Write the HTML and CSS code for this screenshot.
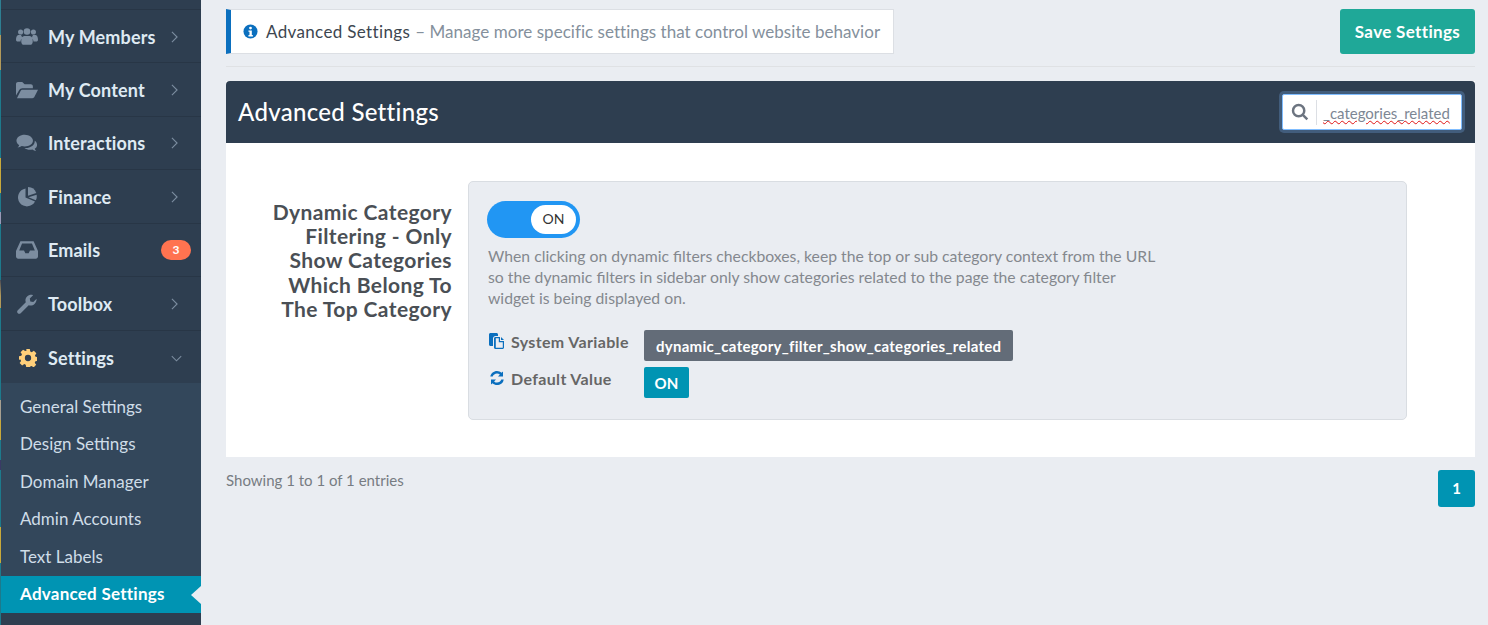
FILE: index.html
```html
<!DOCTYPE html>
<html lang="en">
<head>
    <meta charset="UTF-8">
    <title>Advanced Settings</title>
    <link rel="stylesheet" href="styles.css">
</head>
<body>

    <div class="page-edge"></div>

    <!-- Sidebar -->
    <nav class="sidebar">
        <a class="nav-item first">
            <svg class="nav-icon" viewBox="0 0 24 20"><circle cx="5" cy="4.5" r="2.8"/><circle cx="19" cy="4.5" r="2.8"/><circle cx="12" cy="4" r="3.6"/><path d="M0 13c0-3 1-5 2.500-5.300h3c.3 1.200 1 2.200 1.800 2.900-1.500 1-2.300 2.500-2.300 4.400H2c-1.300 0-2-.8-2-2zM24 13c0-3-1-5-2.500-5.300h-3c-.3 1.200-1 2.200-1.800 2.900 1.500 1 2.300 2.500 2.300 4.400H22c1.300 0 2-.8 2-2zM9 9h6c2.200 0 3.300 2.300 3.300 5.500 0 2.500-1.200 4-3 4H8.700c-1.800 0-3-1.500-3-4C5.700 11.300 6.800 9 9 9z"/></svg>
            <span class="nav-label">My Members</span>
            <svg class="chevron" viewBox="0 0 8 14"><path d="M1 1l6 6-6 6"/></svg>
        </a>
        <a class="nav-item">
            <svg class="nav-icon" viewBox="0 0 24 18"><path d="M0 15V2.500C0 1.200 1 .2 2.200 .2h4.600l2.600 2.500h6.800c1.200 0 2.200 1 2.200 2.200V7H7c-1.600 0-2.900.8-3.600 2.200z"/><path d="M1 18l4-8c.4-.8 1.200-1.300 2.100-1.300H24l-4 8c-.4.8-1.200 1.300-2.100 1.300z"/></svg>
            <span class="nav-label">My Content</span>
            <svg class="chevron" viewBox="0 0 8 14"><path d="M1 1l6 6-6 6"/></svg>
        </a>
        <a class="nav-item">
            <svg class="nav-icon" viewBox="0 0 24 18"><path d="M9.500 0C4.500 0 .5 2.900.5 6.500c0 2 1.200 3.700 3 4.900-.3 1-1 1.900-1.800 2.600 1.600-.2 3.300-.8 4.600-1.700 1 .3 2.100.4 3.200.4 5 0 9-2.900 9-6.200S14.500 0 9.500 0z"/><path d="M20.500 6.500c.2 4.500-4.500 8-10 8l-1.300-.1c1.500 1.300 3.700 2 6 2 .9 0 1.800-.1 2.600-.3 1.100.8 2.600 1.400 4.200 1.600-.7-.6-1.300-1.500-1.600-2.400 1.600-1 2.600-2.600 2.600-4.200 0-2-1-3.500-2.500-4.600z"/></svg>
            <span class="nav-label">Interactions</span>
            <svg class="chevron" viewBox="0 0 8 14"><path d="M1 1l6 6-6 6"/></svg>
        </a>
        <a class="nav-item">
            <svg class="nav-icon" viewBox="0 0 20 20"><path d="M8.500 1.500a9 9 0 1 0 9.500 13L8.500 10.500z"/><path d="M11 0v8.700l8.300-2.600A9 9 0 0 0 11 0z"/><path d="M11.500 10.200l8.100-2.500c.4 2 .1 3.900-.8 5.600z"/></svg>
            <span class="nav-label">Finance</span>
            <svg class="chevron" viewBox="0 0 8 14"><path d="M1 1l6 6-6 6"/></svg>
        </a>
        <a class="nav-item">
            <svg class="nav-icon" viewBox="0 0 20 16"><path fill-rule="evenodd" d="M4 0h12l4 9v5c0 1.100-.9 2-2 2H2c-1.100 0-2-.9-2-2V9zm1.500 2.200L2.900 8.500h4.400l1.200 2.500h3l1.200-2.500h4.400l-2.600-6.300z"/></svg>
            <span class="nav-label">Emails</span>
            <span class="count-badge">3</span>
        </a>
        <a class="nav-item">
            <svg class="nav-icon" viewBox="0 0 20 20"><path d="M19.600 4.700l-3.300 3.300-3-.5-.5-3 3.300-3.300c-2-.7-4.400-.3-6 1.300-1.700 1.700-2 4-1.300 5.800L.8 16.300c-.9.900-.9 2.100 0 2.900.8.800 2 .8 2.900 0l8-8c1.900.8 4.200.4 5.800-1.300 1.600-1.600 2.100-3.200 2.100-5.200z"/></svg>
            <span class="nav-label">Toolbox</span>
            <svg class="chevron" viewBox="0 0 8 14"><path d="M1 1l6 6-6 6"/></svg>
        </a>
        <a class="nav-item open">
            <svg class="nav-icon gear" viewBox="0 0 20 20"><path fill-rule="evenodd" d="M8 0h4l.5 2.800 1.600.7 2.400-1.600 2.800 2.800-1.600 2.400.7 1.600 2.600.4v4l-2.800.5-.7 1.600 1.600 2.400-2.800 2.800-2.400-1.600-1.400.7L12 20H8l-.5-2.500-1.600-.7-2.400 1.600-2.800-2.800 1.600-2.400-.7-1.600L0 12V8l2.600-.5.7-1.600-1.600-2.400 2.800-2.800 2.400 1.600 1.600-.7zM10 6.500a3.500 3.500 0 1 0 0 7 3.500 3.500 0 0 0 0-7z"/></svg>
            <span class="nav-label">Settings</span>
            <svg class="chevron down" viewBox="0 0 14 8"><path d="M1 1l6 6 6-6"/></svg>
        </a>
        <div class="subnav">
            <a class="sub-item">General Settings</a>
            <a class="sub-item">Design Settings</a>
            <a class="sub-item">Domain Manager</a>
            <a class="sub-item">Admin Accounts</a>
            <a class="sub-item">Text Labels</a>
            <a class="sub-item active">Advanced Settings</a>
        </div>
    </nav>

    <!-- Main Content -->
    <main class="main">
        <div class="top-bar">
            <div class="notice">
                <svg class="notice-icon" viewBox="0 0 16 16"><circle cx="8" cy="8" r="7.500"/><circle cx="8" cy="4.300" r="1.500" fill="#fff"/><path d="M5.800 6.800h3.600v5h1.100v1.500H5.800v-1.500h1.100V8.300H5.800z" fill="#fff"/></svg>
                <span class="notice-title">Advanced Settings</span>
                <span class="notice-text">&ndash; Manage more specific settings that control website behavior</span>
            </div>
            <button class="save-button">Save Settings</button>
        </div>

        <section class="panel">
            <header class="panel-head">
                <h1>Advanced Settings</h1>
                <div class="search-box">
                    <svg class="search-icon" viewBox="0 0 16 16"><circle cx="6.800" cy="6.800" r="5"/><path d="M10.500 10.500l4 4"/></svg>
                    <span class="search-divider"></span>
                    <span class="search-value">_categories_related</span>
                </div>
            </header>
            <div class="panel-body">
                <div class="setting-name">Dynamic Category Filtering - Only Show Categories Which Belong To The Top Category</div>
                <div class="setting-box">
                    <div class="toggle"><span class="toggle-knob">ON</span></div>
                    <p class="setting-help">When clicking on dynamic filters checkboxes, keep the top or sub category context from the URL so the dynamic filters in sidebar only show categories related to the page the category filter widget is being displayed on.</p>
                    <div class="meta-grid">
                        <div class="meta-label">
                            <svg class="meta-icon" viewBox="0 0 16 16"><path d="M0 1.500C0 .7.700 0 1.500 0h6C8.300 0 9 .7 9 1.500V3H6.500C5.100 3 4 4.100 4 5.500V13H1.500C.7 13 0 12.300 0 11.500z"/><path fill-rule="evenodd" d="M6.500 4H11v4h4v6.500c0 .8-.7 1.500-1.500 1.500h-7C5.700 16 5 15.300 5 14.500v-9C5 4.700 5.700 4 6.500 4zm.3 1.200v9.600h7V9.200H9.800V5.200z"/><path d="M12 4l3 3h-3z"/></svg>
                            System Variable
                        </div>
                        <span class="tag tag-gray">dynamic_category_filter_show_categories_related</span>
                        <div class="meta-label">
                            <svg class="meta-icon" viewBox="0 0 16 16"><path d="M14 1.500v5h-5l1.900-1.900C10 3.800 9 3.400 8 3.400c-2 0-3.700 1.300-4.300 3.100H1.300C2 3.300 4.700 1 8 1c1.700 0 3.300.7 4.500 1.800zM2 14.500v-5h5l-1.900 1.900c.9.800 1.900 1.200 2.900 1.200 2 0 3.700-1.300 4.300-3.100h2.400C14 13.700 11.300 15 8 15c-1.700 0-3.300-.7-4.500-1.800z"/></svg>
                            Default Value
                        </div>
                        <span class="tag tag-teal">ON</span>
                    </div>
                </div>
            </div>
        </section>

        <div class="table-foot">
            <span class="entries">Showing 1 to 1 of 1 entries</span>
            <span class="page-button">1</span>
        </div>
    </main>

</body>
</html>
```

FILE: styles.css
```css
body, html {
    margin: 0;
    padding: 0;
    height: 100%;
    overflow: hidden;
    background: #eaedf2;
    font-family: 'Lato', 'Noto Sans', sans-serif;
}

body {
    display: flex;
}

/* Sliver of the page behind the sidebar */
.page-edge {
    width: 1px;
    flex: none;
    background: linear-gradient(to bottom,
        #2e7f92 0, #2e7f92 35px,
        #b39a5a 35px, #b39a5a 70px,
        #1d7a8c 70px, #1d7a8c 158px,
        #c9a93a 158px, #c9a93a 193px,
        #1d7a8c 193px, #1d7a8c 212px,
        #9a9ab8 212px, #9a9ab8 224px,
        #1d7a8c 224px, #1d7a8c 280px,
        #4a4a55 280px, #b39a5a 296px, #b39a5a 308px,
        #1d7a8c 308px, #1d7a8c 400px,
        #a8a090 400px, #a8a090 420px,
        #c9a93a 420px, #c9a93a 440px,
        #1d7a8c 440px, #1d7a8c 460px,
        #3a3a66 460px, #3a3a66 470px,
        #1d7a8c 470px, #1d7a8c 527px,
        #c9a93a 527px, #c9a93a 563px,
        #1d7a8c 563px, #1d7a8c 100%);
}

/* Sidebar */
.sidebar {
    width: 200px;
    flex: none;
    height: 625px;
    background: #2e3e50;
    color: #dfeaf3;
    overflow: hidden;
}

.nav-item {
    display: flex;
    align-items: center;
    box-sizing: border-box;
    height: 53.5px;
    padding: 1px 23px 0 15px;
    border-bottom: 1px solid #283646;
    font-size: 18px;
    font-weight: 700;
    letter-spacing: 0.15px;
}

.nav-item.first {
    height: 54px;
    margin-top: 9px;
    border-top: 1px solid #283646;
}

.nav-icon {
    width: 22px;
    height: 20px;
    margin-right: 10px;
    fill: #7c8da0;
    flex: none;
}

.nav-icon.gear {
    fill: #ffcf7a;
    width: 18px;
    height: 18px;
    margin: 0 11px 0 3px;
}

.nav-label {
    flex: 1;
}

.chevron {
    width: 7px;
    height: 12px;
    fill: none;
    stroke: #7c8da0;
    stroke-width: 1.300;
}

.chevron.down {
    width: 11px;
    height: 7px;
    margin-right: -4px;
}

.count-badge {
    width: 30px;
    height: 20px;
    margin-right: -13px;
    border-radius: 10px;
    background: #ff7350;
    color: #fff;
    font-size: 12px;
    text-align: center;
    line-height: 20px;
}

.nav-item.open {
    height: 52.5px;
    padding-top: 3px;
    border-bottom: 0;
    background: #2e3e50;
}

.subnav {
    box-sizing: border-box;
    background: #33475b;
    height: 230px;
    padding-top: 5.5px;
}

.sub-item {
    display: block;
    height: 37.5px;
    line-height: 35.5px;
    padding-left: 19px;
    font-size: 17px;
    color: #cfdde8;
    position: relative;
}

.sub-item.active {
    height: 37px;
    background: #0094b3;
    color: #fff;
    font-weight: 700;
    letter-spacing: 0.25px;
}

.sub-item.active::after {
    content: '';
    position: absolute;
    right: 0;
    top: 10px;
    border: 9px solid transparent;
    border-left: 0;
    border-right: 10px solid #eaedf2;
}

/* Main Content */
.main {
    flex: 1;
    padding: 9px 13px 0 25px;
    min-width: 0;
}

.top-bar {
    display: flex;
    justify-content: space-between;
    align-items: flex-start;
    padding-bottom: 12px;
    border-bottom: 1px solid #dfe1e4;
    margin-bottom: 14px;
}

.notice {
    display: flex;
    align-items: center;
    height: 45px;
    box-sizing: border-box;
    padding-left: 12px;
    padding-right: 13px;
    background: #fff;
    border: 1px solid #dcdfe4;
    border-left: 5px solid #0b6fbe;
    font-size: 17px;
}

.notice-icon {
    width: 15px;
    height: 15px;
    margin-right: 8px;
    fill: #0b6fbe;
}

.notice-title {
    color: #3d4650;
    margin-right: 5px;
    letter-spacing: 0.35px;
}

.notice-text {
    color: #84909c;
    letter-spacing: 0.04px;
}

.save-button {
    width: 135px;
    height: 45px;
    border: none;
    border-radius: 3px;
    background: #1fa898;
    color: #fff;
    font-family: inherit;
    font-size: 17px;
    font-weight: 700;
    letter-spacing: 0.35px;
}

.panel {
    background: #fff;
}

.panel-head {
    display: flex;
    justify-content: space-between;
    align-items: center;
    height: 62px;
    padding: 0 13px 0 12px;
    background: #2e3e50;
    border-radius: 4px 4px 0 0;
}

.panel-head h1 {
    margin: 0 0 2px;
    color: #fff;
    font-size: 24px;
    font-weight: 500;
    letter-spacing: 0.3px;
}

.search-box {
    display: flex;
    align-items: center;
    width: 180px;
    height: 36px;
    box-sizing: border-box;
    background: #fff;
    border: 1px solid #80bdff;
    border-radius: 2px;
    box-shadow: 0 0 0 3px rgba(128, 189, 255, 0.25);
}

.search-icon {
    width: 18px;
    height: 18px;
    margin-left: 8px;
    fill: none;
    stroke: #6c7480;
    stroke-width: 2.200;
}

.search-divider {
    width: 1px;
    height: 25px;
    margin-left: 7px;
    background: #dcdfe4;
}

.search-value {
    margin: 2px 0 0 6px;
    color: #7d8794;
    font-size: 15px;
    text-decoration: underline wavy #e01414 1px;
}

.panel-body {
    display: flex;
    align-items: flex-start;
    height: 314px;
    box-sizing: border-box;
    padding-top: 38px;
}

.setting-name {
    width: 190px;
    margin: 19px 16px 0 36px;
    text-align: right;
    color: #4a4f55;
    font-size: 21px;
    line-height: 24.2px;
    font-weight: 700;
    letter-spacing: 0.4px;
}

.setting-box {
    width: 939px;
    height: 239px;
    box-sizing: border-box;
    padding: 19px 19px 0;
    background: #eaedf2;
    border: 1px solid #d9dde2;
    border-radius: 5px;
}

.toggle {
    display: flex;
    justify-content: flex-end;
    align-items: center;
    width: 93px;
    height: 37px;
    margin-left: -1px;
    box-sizing: border-box;
    padding-right: 4px;
    border-radius: 19px;
    background: #2196f3;
}

.toggle-knob {
    width: 45px;
    height: 29px;
    border-radius: 15px;
    background: #fff;
    color: #333;
    font-size: 14px;
    line-height: 27px;
    text-align: center;
}

.setting-help {
    width: 672px;
    margin: 7px 0 22px;
    color: #84888e;
    font-size: 15.75px;
    line-height: 21px;
}

.meta-grid {
    display: grid;
    grid-template-columns: 156px auto;
    justify-content: start;
    row-gap: 6px;
}

.meta-label {
    display: flex;
    align-items: flex-start;
    margin-left: -1px;
    color: #666;
    font-size: 16px;
    font-weight: 700;
    line-height: 24px;
    letter-spacing: 0.35px;
}

.meta-icon {
    width: 16px;
    height: 16px;
    margin: 3px 6px 0 2px;
    fill: #0b6fbe;
}

.tag {
    height: 31px;
    line-height: 32px;
    padding: 0 12px;
    border-radius: 2px;
    color: #fff;
    font-size: 15px;
    font-weight: 700;
    letter-spacing: 0.28px;
    justify-self: start;
}

.tag-gray {
    background: #636c78;
}

.tag-teal {
    width: 45px;
    padding: 0;
    text-align: center;
    background: #0094b3;
}

.table-foot {
    display: flex;
    justify-content: space-between;
    align-items: flex-start;
    padding-top: 13px;
}

.entries {
    color: #777c82;
    font-size: 15px;
    line-height: 20px;
}

.page-button {
    width: 37px;
    height: 37px;
    border-radius: 3px;
    background: #0094b3;
    color: #fff;
    font-weight: 700;
    font-size: 15px;
    line-height: 37px;
    text-align: center;
}
```
